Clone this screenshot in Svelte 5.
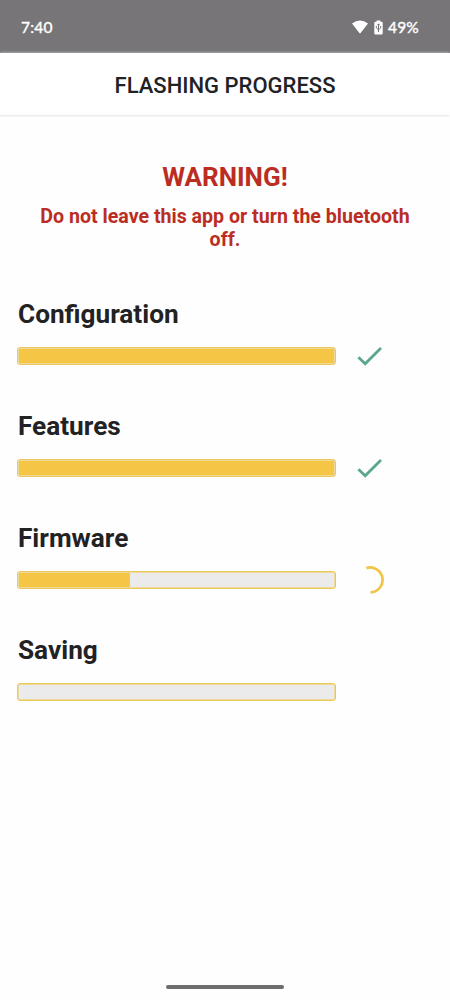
<script>
  const steps = [
    { name: 'Configuration', progress: 100, state: 'done' },
    { name: 'Features', progress: 100, state: 'done' },
    { name: 'Firmware', progress: 35.3, state: 'busy' },
    { name: 'Saving', progress: 0, state: 'waiting' }
  ];
</script>

<div class="screen">
  <div class="status">
    <span class="time">7:40</span>
    <div class="indicators">
      <svg class="wifi" width="18" height="14" viewBox="0 0 18 14"><path d="M1 3.5Q9-2.3 17 3.5L9.6 13Q9 13.8 8.4 13Z" fill="#fff" /></svg>
      <svg class="battery" width="9" height="15" viewBox="0 0 9 15">
        <path d="M2.6 0.5H6.4V1.7H7.5Q8.7 1.7 8.7 2.9V13.2Q8.7 14.4 7.5 14.4H1.5Q.3 14.4 .3 13.2V2.9Q.3 1.7 1.5 1.7H2.6Z" fill="#fff" />
        <path d="M4.5 12V4M3.4 5.2L4.5 3.8 5.6 5.2M2.3 6V7.9L4.5 9.8 6.7 7.9V6" fill="none" stroke="#777578" stroke-width="1" />
      </svg>
      <span>49%</span>
    </div>
  </div>
  <header>FLASHING PROGRESS</header>
  <main>
    <div class="warning">
      <h1>WARNING!</h1>
      <p>Do not leave this app or turn the bluetooth off.</p>
    </div>
    {#each steps as step}
      <section>
        <h2>{step.name}</h2>
        <div class="row">
          <div class="track"><div class="fill" style="width: {step.progress}%"></div></div>
          {#if step.state === 'done'}
            <svg width="28" height="28" viewBox="0 0 28 28"><path d="M2.4 15.2L9.2 21.8 25 6.1" fill="none" stroke="#5aa88c" stroke-width="2.8" /></svg>
          {:else if step.state === 'busy'}
            <svg width="28" height="28" viewBox="0 0 28 28"><path d="M10.4 2.1A12.4 12.4 0 1 1 14.6 26.3" fill="none" stroke="#f0c449" stroke-width="2.7" /></svg>
          {/if}
        </div>
      </section>
    {/each}
  </main>
  <div class="handle"></div>
</div>

<style>
  :global(body) { margin: 0; background: #fefefe; }
  .screen {
    box-sizing: border-box;
    width: 450px;
    height: 1000px;
    display: flex;
    flex-direction: column;
    overflow: hidden;
    background: #fefefe;
    color: #222224;
    font-family: Roboto, sans-serif;
  }
  .status {
    box-sizing: border-box;
    height: 53px;
    flex: none;
    display: flex;
    justify-content: space-between;
    align-items: center;
    padding: 1px 31px 0 21px;
    background: #777578;
    color: #fff;
    font: 400 15.5px/20px Lato, sans-serif;
    letter-spacing: 0.2px;
    -webkit-text-stroke: 0.4px #fff;
  }
  .indicators { display: flex; align-items: center; }
  .battery { margin: 0 5px 0 5px; }
  header {
    box-sizing: border-box;
    height: 62px;
    flex: none;
    padding-top: 2px;
    font-size: 22px;
    font-weight: 500;
    line-height: 62px;
    text-align: center;
    background: #fff;
    box-shadow: 0 0 3px #d3cfd3;
  }
  main { flex: 1; padding: 46px 17px 0; }
  .warning { height: 138px; color: #bb2d22; text-align: center; }
  h1 { margin: 0; font-size: 26px; line-height: 33px; font-weight: 700; }
  p { margin: 11px 10px 0; font-size: 19.6px; line-height: 23px; font-weight: 700; }
  section { height: 112px; }
  h2 { margin: 0 0 0 1px; font-size: 26.2px; line-height: 31px; font-weight: 700; }
  .row { display: flex; align-items: center; gap: 20px; height: 28px; margin-top: 12px; }
  .track {
    box-sizing: border-box;
    width: 319px;
    height: 18px;
    padding: 1px;
    border: 1px solid #eac85c;
    border-radius: 3px;
    background: #ebebeb;
    box-shadow: inset 0 0 0 1px #eedb9c;
  }
  .fill { height: 100%; background: #f5c645; }
  .handle { width: 118px; height: 4px; flex: none; margin: 0 auto 11px; border-radius: 2px; background: #6c6e6d; }
</style>
